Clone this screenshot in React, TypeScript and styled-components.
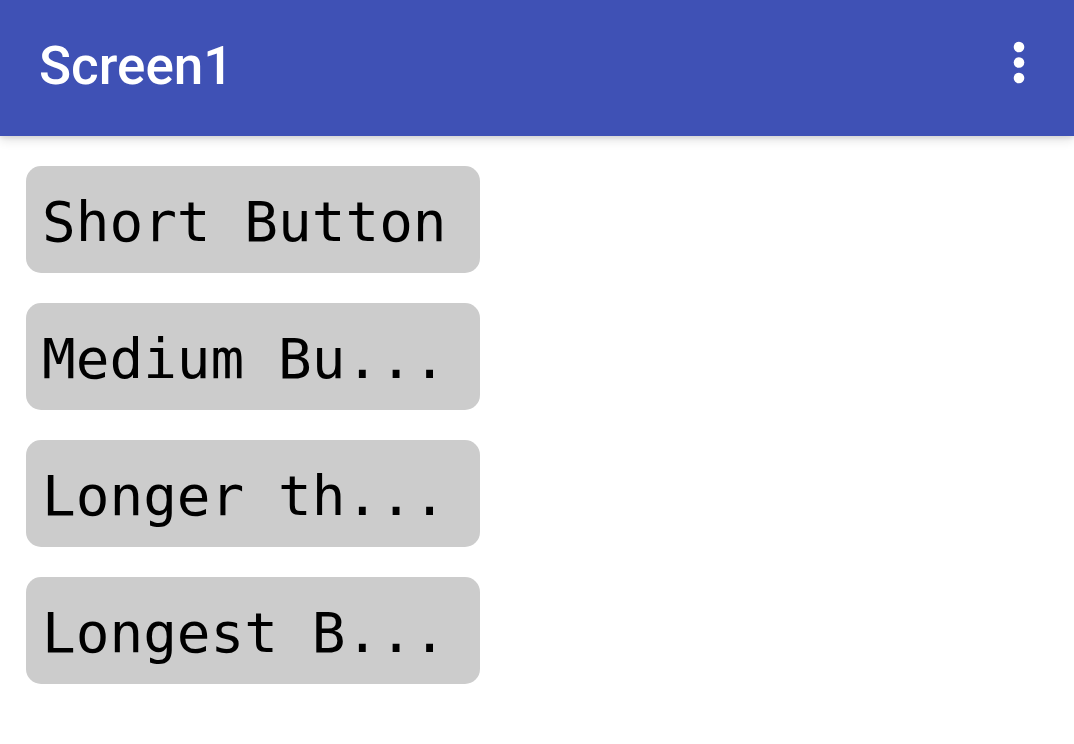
import React, { FC } from "react";
import styled, { createGlobalStyle } from "styled-components";

const GlobalStyle = createGlobalStyle`
  html, body {
    margin: 0;
    padding: 0;
    background: #ffffff;
  }
`;

const Page = styled.div`
  width: 1074px;
  height: 744px;
  overflow: hidden;
  background: #ffffff;
`;

const AppBar = styled.header`
  position: relative;
  z-index: 1;
  height: 136px;
  display: flex;
  align-items: center;
  justify-content: space-between;
  padding: 0 53px 0 39px;
  box-sizing: border-box;
  background: #3f51b5;
  box-shadow: 0 4px 10px rgba(0, 0, 0, 0.12), 0 2px 4px rgba(0, 0, 0, 0.08);
`;

const Title = styled.h1`
  margin: 0 0 4px 0;
  font-family: Roboto, "Liberation Sans", sans-serif;
  font-weight: 500;
  font-size: 53px;
  letter-spacing: 0;
  color: #ffffff;
`;

const MenuButton = styled.button`
  display: flex;
  align-items: center;
  justify-content: center;
  width: 40px;
  height: 60px;
  margin-right: -18px;
  margin-bottom: 10px;
  padding: 0;
  border: none;
  background: transparent;
`;

const ButtonList = styled.main`
  display: flex;
  flex-direction: column;
  align-items: flex-start;
  gap: 30px;
  padding: 30px 0 0 26px;
`;

const GrayButton = styled.button`
  width: 454px;
  height: 107px;
  display: flex;
  align-items: center;
  padding: 5px 0 0 16px;
  border: none;
  border-radius: 15px;
  background: #cccccc;
  color: #000000;
  font-family: "DejaVu Sans Mono", "Liberation Mono", monospace;
  font-size: 56px;
  line-height: 1;
  white-space: pre;
  overflow: hidden;
  text-align: left;
`;

const labels = [
  "Short Button",
  "Medium Bu...",
  "Longer th...",
  "Longest B...",
];

const App: FC = () => (
  <Page>
    <GlobalStyle />
    <AppBar>
      <Title>Screen1</Title>
      <MenuButton aria-label="More options">
        <svg width="12" height="44" viewBox="0 0 12 44">
          <circle cx="6" cy="6" r="5.3" fill="#ffffff" />
          <circle cx="6" cy="21.5" r="5.3" fill="#ffffff" />
          <circle cx="6" cy="37" r="5.3" fill="#ffffff" />
        </svg>
      </MenuButton>
    </AppBar>
    <ButtonList>
      {labels.map((label) => (
        <GrayButton key={label}>{label}</GrayButton>
      ))}
    </ButtonList>
  </Page>
);

export default App;
